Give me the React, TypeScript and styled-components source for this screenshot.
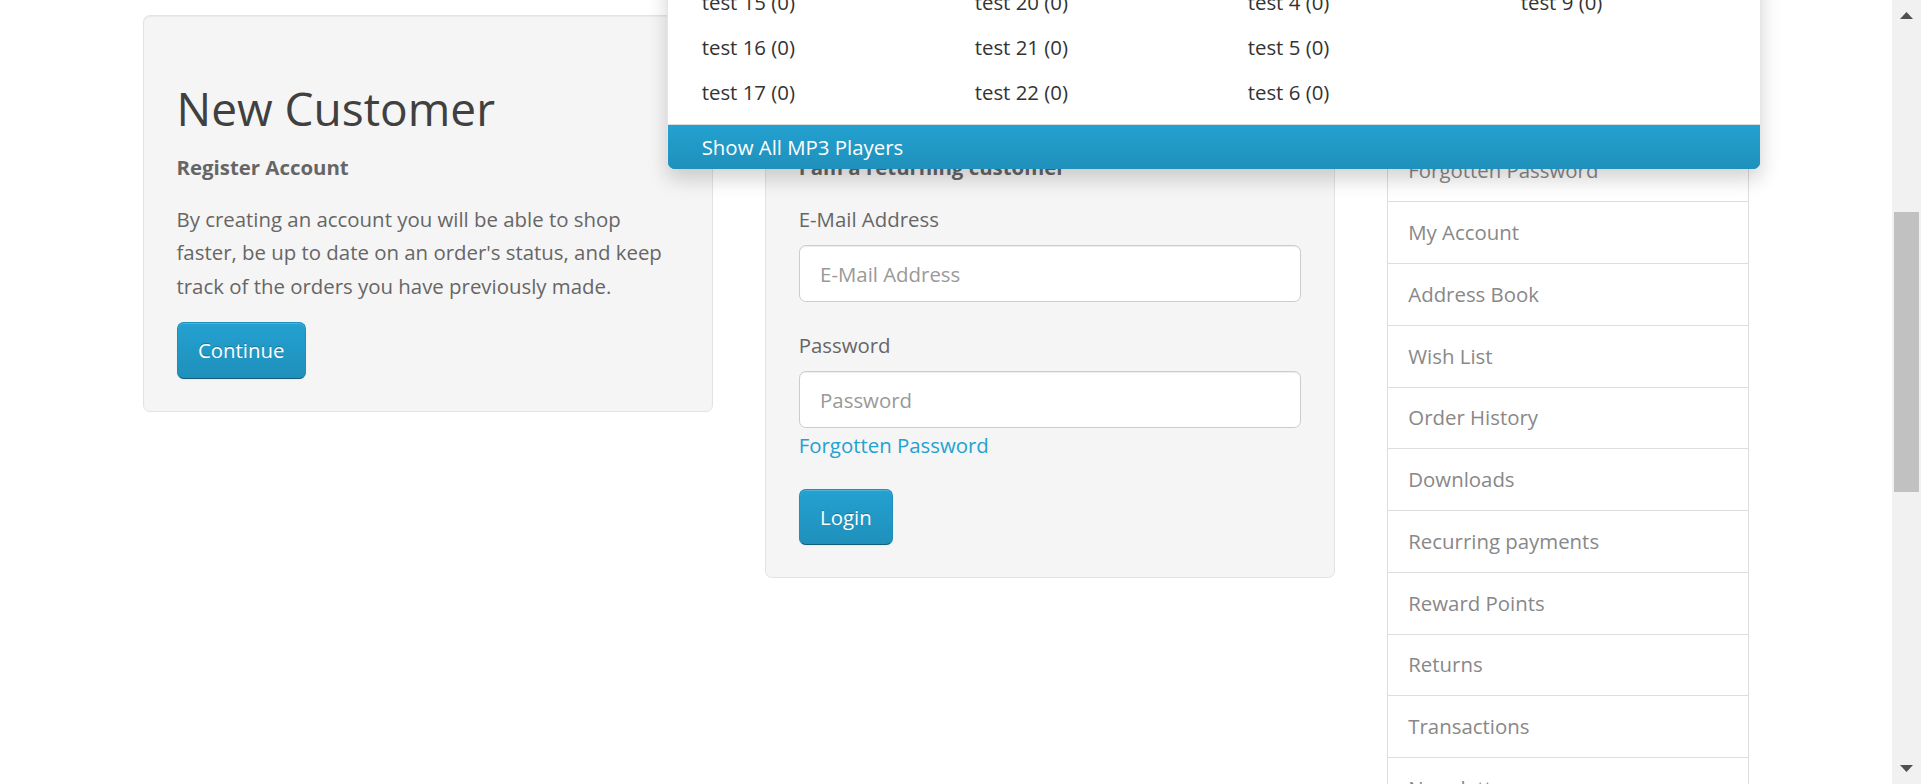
import React from "react";
import styled, { createGlobalStyle } from "styled-components";

const Global = createGlobalStyle`
  html, body { margin: 0; padding: 0; background: #ffffff; overflow: hidden; }
  body {
    font-family: "Open Sans", "Liberation Sans", sans-serif;
    font-size: 20.4px;
    line-height: 33.3px;
    color: #666666;
  }
  * { box-sizing: border-box; }
`;

const Viewport = styled.div`
  display: flex;
  width: 1921px;
  height: 784px;
  overflow: hidden;
`;

const Page = styled.div`
  position: relative;
  flex: 1;
  min-width: 0;
  padding-top: 15px;
  overflow: hidden;
`;

const Container = styled.div`
  width: 1607px;
  margin: 0 auto;
  display: flex;
  align-items: flex-start;
  gap: 51.6px;
`;

const Content = styled.div`
  display: grid;
  grid-template-columns: 570.6px 570.6px;
  column-gap: 51.6px;
  align-items: start;
`;

const Well = styled.div`
  background: #f5f5f5;
  border: 1px solid #e3e3e3;
  border-radius: 6.8px;
  box-shadow: inset 0 1px 1px rgba(0, 0, 0, 0.05);
  padding: 66.85px 33px 32px;
`;

const Heading = styled.h2`
  margin: 0 0 17.6px;
  font-size: 46px;
  line-height: 50.6px;
  font-weight: 400;
  color: #404040;
`;

const Lead = styled.p`
  margin: 0 0 18.7px;
  font-weight: 700;
  color: #666666;
`;

const Text = styled.p`
  margin: 0 0 19.3px;
`;

const Button = styled.button`
  display: inline-block;
  font-family: inherit;
  font-size: 20.4px;
  line-height: 34px;
  padding: 10.2px 20.4px;
  color: #ffffff;
  border: 1px solid;
  border-color: #1f90bb #1f90bb #145e7a;
  border-radius: 6.8px;
  background-color: #229ac8;
  background-image: linear-gradient(to bottom, #23a1d1, #1f90bb);
  text-shadow: 0 -1px 0 rgba(0, 0, 0, 0.25);
  box-shadow: inset 0 1px 0 rgba(255, 255, 255, 0.2), 0 1px 2px rgba(0, 0, 0, 0.05);
  cursor: pointer;
`;

const FormGroup = styled.div<{ $gap: number }>`
  margin-bottom: ${(p) => p.$gap}px;
`;

const Label = styled.label`
  display: block;
  margin-bottom: 9px;
  color: #666666;
`;

const Input = styled.input`
  display: block;
  width: 100%;
  height: 56.6px;
  padding: 0 20.4px;
  font-family: inherit;
  font-size: 20.4px;
  color: #555555;
  background: #ffffff;
  border: 1px solid #cccccc;
  border-radius: 6.8px;
  box-shadow: inset 0 1px 1px rgba(0, 0, 0, 0.075);
  &::placeholder { color: #999999; }
`;

const Link = styled.a`
  display: inline-block;
  margin-top: 1.1px;
  color: #23a1d1;
  text-decoration: none;
`;

const Aside = styled.div`
  width: 362.6px;
  margin-top: 1px;
  display: flex;
  flex-direction: column;
`;

const ListItem = styled.a`
  display: block;
  padding: 12.78px 20.4px 14px;
  margin-bottom: -1px;
  line-height: 34px;
  color: #888888;
  background: #ffffff;
  border: 1px solid #dddddd;
  text-decoration: none;
  &:first-child { border-radius: 6.8px 6.8px 0 0; }
`;

const Dropdown = styled.div`
  position: absolute;
  top: -119.9px;
  left: 666.7px;
  width: 1094px;
  background: #ffffff;
  border: 1px solid rgba(0, 0, 0, 0.1);
  border-bottom: none;
  border-radius: 6.8px;
  box-shadow: 0 10px 20px rgba(0, 0, 0, 0.175);
  z-index: 10;
`;

const DropInner = styled.div`
  display: flex;
  padding-top: 8.5px;
`;

const DropColumn = styled.ul`
  list-style: none;
  margin: 0;
  padding: 0;
  width: 273.7px;
`;

const DropLink = styled.a`
  display: block;
  padding: 5.5px 34px;
  line-height: 34px;
  color: #333333;
  text-decoration: none;
  white-space: nowrap;
`;

const SeeAll = styled.a`
  display: block;
  margin-top: 9.4px;
  border-top: 1px solid #dddddd;
  height: 45.3px;
  padding: 0 34px;
  line-height: 44.3px;
  color: #ffffff;
  text-decoration: none;
  background-color: #229ac8;
  background-image: linear-gradient(to bottom, #23a1d1, #1f90bb);
  border-radius: 0 0 6.8px 6.8px;
`;

const ScrollBar = styled.div`
  width: 29px;
  flex: none;
  display: flex;
  flex-direction: column;
  background: #f1f1f1;
`;

const ArrowBtn = styled.div<{ $down?: boolean }>`
  height: 29px;
  display: flex;
  justify-content: center;
  align-items: ${(p) => (p.$down ? "flex-end" : "flex-start")};
  padding: ${(p) => (p.$down ? "0 0 12.5px" : "11.5px 0 0")};
`;

const Track = styled.div`
  flex: 1;
  padding: 183px 2px 0;
`;

const Thumb = styled.div`
  height: 280px;
  background: #c1c1c1;
`;

const columns = [
  ["test 11 (0)", "test 12 (0)", "test 15 (0)", "test 16 (0)", "test 17 (0)"],
  ["test 18 (0)", "test 19 (0)", "test 20 (0)", "test 21 (0)", "test 22 (0)"],
  ["test 23 (0)", "test 24 (0)", "test 4 (0)", "test 5 (0)", "test 6 (0)"],
  ["test 7 (0)", "test 8 (0)", "test 9 (0)"],
];

const accountLinks = [
  "Login",
  "Register",
  "Forgotten Password",
  "My Account",
  "Address Book",
  "Wish List",
  "Order History",
  "Downloads",
  "Recurring payments",
  "Reward Points",
  "Returns",
  "Transactions",
  "Newsletter",
];

export default function App() {
  return (
    <>
      <Global />
      <Viewport>
        <Page>
          <Container>
            <Content>
              <Well>
                <Heading>New Customer</Heading>
                <Lead>Register Account</Lead>
                <Text>
                  By creating an account you will be able to shop faster, be up to date on an
                  order's status, and keep track of the orders you have previously made.
                </Text>
                <Button>Continue</Button>
              </Well>
              <Well>
                <Heading>Returning Customer</Heading>
                <Lead>I am a returning customer</Lead>
                <FormGroup $gap={27}>
                  <Label htmlFor="input-email">E-Mail Address</Label>
                  <Input id="input-email" type="text" placeholder="E-Mail Address" />
                </FormGroup>
                <FormGroup $gap={26.6}>
                  <Label htmlFor="input-password">Password</Label>
                  <Input id="input-password" type="password" placeholder="Password" />
                  <Link href="#">Forgotten Password</Link>
                </FormGroup>
                <Button>Login</Button>
              </Well>
            </Content>
            <Aside>
              {accountLinks.map((l) => (
                <ListItem key={l} href="#">
                  {l}
                </ListItem>
              ))}
            </Aside>
          </Container>
          <Dropdown>
            <DropInner>
              {columns.map((col, i) => (
                <DropColumn key={i}>
                  {col.map((t) => (
                    <li key={t}>
                      <DropLink href="#">{t}</DropLink>
                    </li>
                  ))}
                </DropColumn>
              ))}
            </DropInner>
            <SeeAll href="#">Show All MP3 Players</SeeAll>
          </Dropdown>
        </Page>
        <ScrollBar>
          <ArrowBtn>
            <svg width="13" height="7" viewBox="0 0 13 7">
              <path d="M0 7 L6.5 0 L13 7 Z" fill="#505050" />
            </svg>
          </ArrowBtn>
          <Track>
            <Thumb />
          </Track>
          <ArrowBtn $down>
            <svg width="13" height="7" viewBox="0 0 13 7">
              <path d="M0 0 L6.5 7 L13 0 Z" fill="#505050" />
            </svg>
          </ArrowBtn>
        </ScrollBar>
      </Viewport>
    </>
  );
}
